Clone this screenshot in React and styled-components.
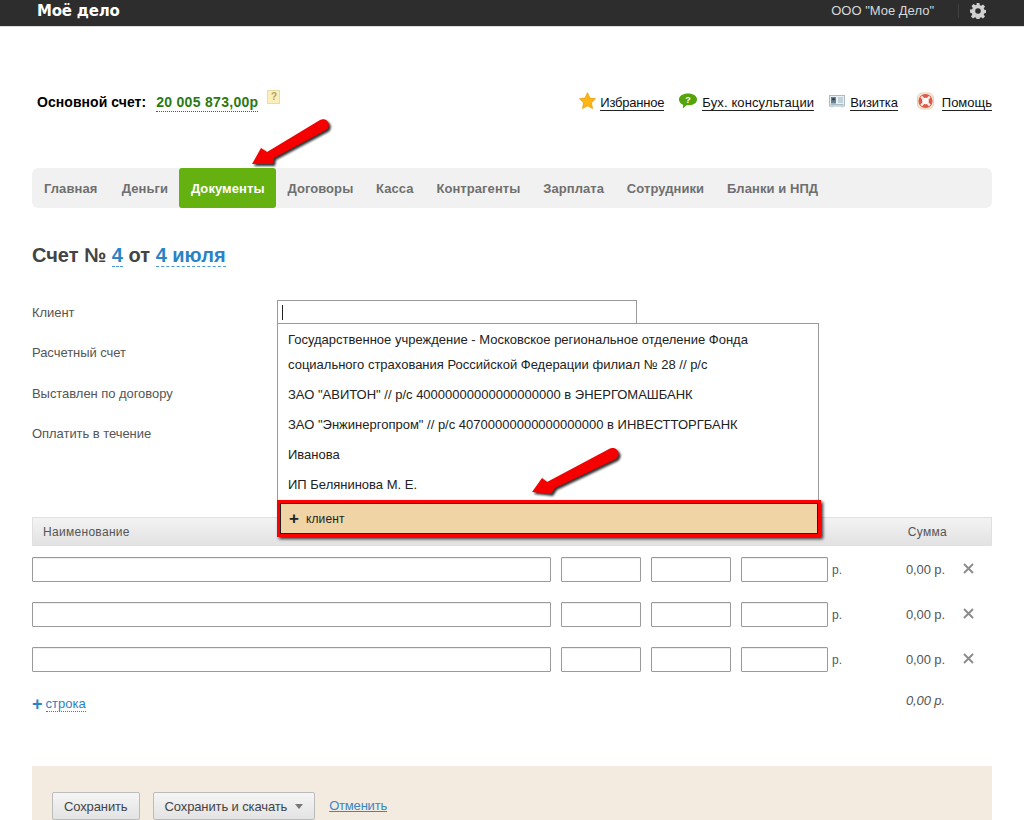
import React from "react";
import styled, { createGlobalStyle } from "styled-components";

const GlobalStyle = createGlobalStyle`
  html, body {
    margin: 0;
    padding: 0;
    background: #fff;
    height: 820px;
    overflow: hidden;
  }
  body {
    font-family: "Liberation Sans", Arial, sans-serif;
    font-size: 13px;
    color: #4a4a4a;
  }
  * {
    box-sizing: border-box;
  }
`;

const Page = styled.div`
  position: relative;
  width: 1024px;
  height: 820px;
  overflow: hidden;
`;
const TopBar = styled.header`
  height: 27px;
  background: #2d2d2d;
  border-bottom: 1px solid #dcdcdc;
  display: flex;
  align-items: center;
  padding: 0 38px 0 37px;
  color: #d8d8d8;
`;
const Logo = styled.div`
  font-family: "DejaVu Sans", sans-serif;
  font-weight: 700;
  font-size: 15px;
  line-height: 20px;
  letter-spacing: -0.2px;
  color: #fff;
  margin-top: -4px;
  flex: 1;
`;
const Company = styled.div`
  font-size: 13px;
  margin-top: -5px;
`;
const BarDivider = styled.div`
  width: 1px;
  height: 14px;
  margin: -5px 11px 0 24px;
  background: #3f3f3f;
`;
const Gear = styled.svg`
  width: 16px;
  height: 16px;
  margin-top: -5px;
  display: block;
`;
const Content = styled.main`
  padding: 0 32px;
`;
const AccountRow = styled.div`
  display: flex;
  align-items: flex-start;
  justify-content: space-between;
  padding: 63px 0 0 5px;
  height: 141px;
`;
const Account = styled.div`
  display: flex;
  align-items: flex-start;
`;
const AccountLabel = styled.span`
  font-size: 14px;
  font-weight: 700;
  color: #000;
  line-height: 24px;
  letter-spacing: 0.05px;
`;
const AccountSum = styled.span`
  font-size: 14px;
  font-weight: 700;
  color: #2a7a12;
  line-height: 16px;
  margin: 4px 0 0 10px;
  letter-spacing: 0.3px;
  border-bottom: 1px dotted #2a7a12;
  height: 18px;
`;
const Hint = styled.span`
  width: 13px;
  height: 14px;
  margin: 0 0 0 9px;
  background: #fbf0ba;
  border: 1px solid #e8dca8;
  color: #b5a268;
  font-size: 10px;
  font-weight: 700;
  line-height: 12px;
  text-align: center;
`;
const QuickLinks = styled.nav`
  display: flex;
  align-items: center;
  height: 24px;
`;
const QuickItem = styled.div`
  display: flex;
  align-items: center;
  margin-left: ${(p) => p.$gap}px;
`;
const QuickIcon = styled.svg`
  width: ${(p) => p.$w}px;
  height: 18px;
  display: block;
  margin-top: -2px;
  margin-right: ${(p) => p.$mr}px;
`;
const QuickLink = styled.a`
  font-size: 13px;
  line-height: 15px;
  letter-spacing: ${(p) => p.$track || 0}px;
  color: #111;
  border-bottom: 1px solid #222;
  margin-top: 2px;
`;
const NavBar = styled.nav`
  display: flex;
  height: 40px;
  background: #f1f1f1;
  border-radius: 6px;
`;
const NavItem = styled.a`
  display: flex;
  align-items: center;
  padding: 0 ${(p) => (p.$first ? 13 : 11.4)}px 0 ${(p) => (p.$first ? 12 : 11.4)}px;
  font-size: 13px;
  font-weight: 700;
  letter-spacing: 0.07px;
  color: ${(p) => (p.$active ? "#fff" : "#6f6f6f")};
  background: ${(p) => (p.$active ? "#64b10f" : "transparent")};
  border-radius: 3px;
`;
const Title = styled.h1`
  margin: 0;
  padding-top: 35px;
  height: 92px;
  font-size: 20px;
  line-height: 24px;
  font-weight: 700;
  color: #444;
`;
const TitleLink = styled.a`
  color: #2a83c6;
  border-bottom: 1px dashed #4a9ad6;
`;
const Form = styled.div`
  height: 217px;
`;
const FormRow = styled.div`
  display: flex;
  height: 40.3px;
`;
const FormLabel = styled.label`
  width: 245px;
  font-size: 13px;
  letter-spacing: -0.05px;
  line-height: 26px;
  color: #555;
`;
const ClientInput = styled.div`
  width: 360px;
  height: 24px;
  border: 1px solid #9a9a9a;
  padding: 4px 4px;
`;
const Caret = styled.div`
  width: 1px;
  height: 15px;
  background: #222;
`;
const Dropdown = styled.div`
  position: absolute;
  left: 277px;
  top: 323px;
  width: 542px;
  height: 214px;
  background: #fff;
  border: 1px solid #9a9a9a;
  padding-top: 3px;
`;
const Option = styled.div`
  padding: 0 10px;
  font-size: 13px;
  line-height: 25px;
  color: #222;
  margin-bottom: 5px;
`;
const NewClient = styled.div`
  position: absolute;
  left: -1px;
  right: -3px;
  top: 176px;
  height: 37px;
  background: #f0d4a6;
  border: 3px solid #f00;
  box-shadow: 2px 2px 3px rgba(0, 0, 0, 0.8), inset 0 0 0 1px #222;
  display: flex;
  align-items: center;
  padding-left: 9px;
  font-size: 12px;
  letter-spacing: 0.1px;
  color: #222;
`;
const PlusMark = styled.b`
  font-size: 17px;
  font-weight: 700;
  color: #222;
  margin-right: 7px;
  line-height: 17px;
`;
const TableHead = styled.div`
  height: 29px;
  display: flex;
  align-items: center;
  justify-content: space-between;
  padding: 0 44px 0 10px;
  background: linear-gradient(#f3f3f3, #e2e2e2);
  border: 1px solid #e0e0e0;
  font-size: 12px;
  letter-spacing: 0.3px;
  color: #555;
`;
const Rows = styled.div`
  padding-top: 11px;
`;
const Row = styled.div`
  display: flex;
  align-items: center;
  height: 25px;
  margin-bottom: 20px;
`;
const Field = styled.div`
  width: ${(p) => p.$w}px;
  height: 25px;
  margin-right: 10px;
  border: 1px solid #9a9a9a;
  border-radius: 1px;
  box-shadow: inset 0 1px 1px #eee;
`;
const Rub = styled.span`
  margin-left: -6px;
  width: 47px;
  color: #4a5a6a;
  font-size: 12px;
`;
const RowSum = styled.span`
  width: 66px;
  text-align: right;
  font-size: 13px;
  letter-spacing: -0.1px;
  color: #555;
`;
const Remove = styled.svg`
  width: 11px;
  height: 11px;
  margin: -3px 0 0 18px;
  display: block;
`;
const AddRow = styled.div`
  display: flex;
  justify-content: space-between;
  padding-right: 47px;
  margin-top: 24px;
  height: 70px;
`;
const AddLink = styled.div`
  display: flex;
  align-items: flex-start;
`;
const AddPlus = styled.b`
  font-size: 18px;
  line-height: 16px;
  color: #2a83c6;
  margin-right: 3px;
`;
const DottedLink = styled.a`
  color: #2a83c6;
  font-size: 13px;
  line-height: 15px;
  border-bottom: 1px dotted #2a83c6;
  height: 16px;
`;
const TotalSum = styled.span`
  font-style: italic;
  font-size: 13px;
  letter-spacing: -0.1px;
  color: #555;
  line-height: 14px;
  margin-top: -2px;
`;
const Footer = styled.div`
  height: 54px;
  background: #f3ebe0;
  padding: 26px 0 0 20px;
  display: flex;
  align-items: flex-start;
`;
const Button = styled.button`
  height: 28px;
  padding: 0 11px;
  margin-right: 13px;
  border: 1px solid #bbb;
  border-radius: 2px;
  background: linear-gradient(#f5f5f5, #e3e3e3);
  font: 13px "Liberation Sans", Arial, sans-serif;
  letter-spacing: -0.12px;
  color: #444;
  display: flex;
  align-items: center;
`;
const Triangle = styled.span`
  width: 0;
  height: 0;
  margin: 1px 0 0 8px;
  border-left: 4.5px solid transparent;
  border-right: 4.5px solid transparent;
  border-top: 5px solid #777;
`;
const CancelLink = styled.a`
  color: #3b86c6;
  font-size: 13px;
  letter-spacing: -0.2px;
  line-height: 15px;
  margin: 6px 0 0 1px;
  text-decoration: underline;
`;
const Arrow = styled.svg`
  position: absolute;
  overflow: visible;
  left: ${(p) => p.$x}px;
  top: ${(p) => p.$y}px;
`;

const navItems = [
  "Главная",
  "Деньги",
  "Документы",
  "Договоры",
  "Касса",
  "Контрагенты",
  "Зарплата",
  "Сотрудники",
  "Бланки и НПД",
];

const clients = [
  "ЗАО \"АВИТОН\" // р/с 40000000000000000000 в ЭНЕРГОМАШБАНК",
  "ЗАО \"Энжинергопром\" // р/с 40700000000000000000 в ИНВЕСТТОРГБАНК",
  "Иванова",
  "ИП Белянинова М. Е.",
];

// x, y are page coordinates, and d uses the same coordinates through viewBox
function RedArrow({ x, y, w, h, d, blurId }) {
  return (
    <Arrow $x={x} $y={y} width={w} height={h} viewBox={`${x} ${y} ${w} ${h}`}>
      <defs>
        <filter id={blurId} x="-20%" y="-20%" width="140%" height="140%">
          <feGaussianBlur stdDeviation="1" />
        </filter>
      </defs>
      <path d={d} fill="#000" opacity="0.8" transform="translate(2 2)" filter={`url(#${blurId})`} />
      <path d={d} fill="#f40000" />
    </Arrow>
  );
}

function ItemRow() {
  return (
    <Row>
      <Field $w={519} />
      <Field $w={80} />
      <Field $w={80} />
      <Field $w={87} />
      <Rub>р.</Rub>
      <RowSum>0,00 р.</RowSum>
      <Remove viewBox="0 0 11 11">
        <path d="M1 1l9 9M10 1l-9 9" stroke="#8d8d8d" strokeWidth="2" />
      </Remove>
    </Row>
  );
}

export default function App() {
  return (
    <Page>
      <GlobalStyle />
      <TopBar>
        <Logo>Моё дело</Logo>
        <Company>ООО "Мое Дело"</Company>
        <BarDivider />
        <Gear viewBox="0 0 16 16">
          <path
            fill="#d0d0d0"
            fillRule="evenodd"
            d="M6.600 0h2.800l.4 2.200 1.300.6 1.900-1.300 2 2-1.300 1.900.6 1.300 2.200.4v2.800l-2.200.4-.6 1.300 1.300 1.900-2 2-1.900-1.300-1.300.6-.4 2.200H6.600l-.4-2.200-1.300-.6-1.900 1.300-2-2 1.300-1.900-.6-1.300L0 9.400V6.600l2.200-.4.6-1.300L1.500 3l2-2 1.900 1.300 1.300-.6zM8 5.200a2.800 2.800 0 1 0 0 5.600 2.800 2.800 0 0 0 0-5.600z"
          />
        </Gear>
      </TopBar>
      <Content>
        <AccountRow>
          <Account>
            <AccountLabel>Основной счет:</AccountLabel>
            <AccountSum>20 005 873,00р</AccountSum>
            <Hint>?</Hint>
          </Account>
          <QuickLinks>
            <QuickItem $gap={0}>
              <QuickIcon viewBox="0 0 17 18" $w={17} $mr={4}>
                <path
                  d="M8.500 .8l2.400 5.300 5.600.7-4.100 4 1.100 5.700-5-2.800-5 2.800 1.100-5.700-4.100-4 5.600-.7z"
                  fill="#fdb515"
                  stroke="#ee9a0a"
                  strokeWidth="0.8"
                />
              </QuickIcon>
              <QuickLink $track={-0.2}>Избранное</QuickLink>
            </QuickItem>
            <QuickItem $gap={15}>
              <QuickIcon viewBox="0 0 18 18" $w={18} $mr={5}>
                <path
                  d="M9 1.500c5 0 9 2.300 9 5.900s-4 5.900-9 5.900h-1.500L3.800 16.500l.4-3.800C1.700 11.700 0 9.800 0 7.400 0 3.800 4 1.500 9 1.500z"
                  fill="#54a40c"
                />
                <text x="9" y="10.500" fontSize="9" fontWeight="700" fill="#fff" textAnchor="middle">
                  ?
                </text>
              </QuickIcon>
              <QuickLink $track={0.12}>Бух. консультации</QuickLink>
            </QuickItem>
            <QuickItem $gap={15}>
              <QuickIcon viewBox="0 0 16 18" $w={16} $mr={5}>
                <rect x="0.5" y="3.500" width="15" height="10.500" fill="#e8f2f6" stroke="#a9bcc6" />
                <rect x="2" y="5" width="5" height="6.500" fill="#6a7f8d" />
                <circle cx="4.500" cy="7.300" r="1.300" fill="#2f3f4b" />
                <path d="M9 6h5M9 8h5M9 10h5" stroke="#9db0bc" />
                <path d="M3 14v1.500M13 14v1.500M1.500 12.500h13" stroke="#a9bcc6" />
              </QuickIcon>
              <QuickLink $track={-0.1}>Визитка</QuickLink>
            </QuickItem>
            <QuickItem $gap={19}>
              <QuickIcon viewBox="0 0 17 18" $w={17} $mr={8}>
                <rect x="0.500" y="1" width="16" height="16" rx="5" fill="#f4e8d4" stroke="#e6d2b4" />
                <circle cx="8.500" cy="9" r="5.200" fill="#fff" stroke="#de5a4c" strokeWidth="3.800" />
                <path
                  d="M4.200 4.700l2.200 2.200M12.800 4.700l-2.200 2.200M4.200 13.300l2.200-2.200M12.800 13.300l-2.200-2.200"
                  stroke="#f6eee6"
                  strokeWidth="2.400"
                />
              </QuickIcon>
              <QuickLink>Помощь</QuickLink>
            </QuickItem>
          </QuickLinks>
        </AccountRow>
        <NavBar>
          {navItems.map((item, i) => (
            <NavItem key={item} $first={i === 0} $active={item === "Документы"}>
              {item}
            </NavItem>
          ))}
        </NavBar>
        <Title>
          Счет № <TitleLink>4</TitleLink> от <TitleLink>4 июля</TitleLink>
        </Title>
        <Form>
          <FormRow>
            <FormLabel>Клиент</FormLabel>
            <ClientInput>
              <Caret />
            </ClientInput>
          </FormRow>
          <FormRow>
            <FormLabel>Расчетный счет</FormLabel>
          </FormRow>
          <FormRow>
            <FormLabel>Выставлен по договору</FormLabel>
          </FormRow>
          <FormRow>
            <FormLabel>Оплатить в течение</FormLabel>
          </FormRow>
        </Form>
        <TableHead>
          <span>Наименование</span>
          <span>Сумма</span>
        </TableHead>
        <Rows>
          <ItemRow />
          <ItemRow />
          <ItemRow />
        </Rows>
        <AddRow>
          <AddLink>
            <AddPlus>+</AddPlus>
            <DottedLink>строка</DottedLink>
          </AddLink>
          <TotalSum>0,00 р.</TotalSum>
        </AddRow>
        <Footer>
          <Button>Сохранить</Button>
          <Button>
            Сохранить и скачать
            <Triangle />
          </Button>
          <CancelLink>Отменить</CancelLink>
        </Footer>
      </Content>
      <Dropdown>
        <Option>
          Государственное учреждение - Московское региональное отделение Фонда
          <br />
          социального страхования Российской Федерации филиал № 28 // р/с
        </Option>
        {clients.map((client) => (
          <Option key={client}>{client}</Option>
        ))}
        <NewClient>
          <PlusMark>+</PlusMark>
          клиент
        </NewClient>
      </Dropdown>
      <RedArrow
        x={245}
        y={115}
        w={90}
        h={55}
        blurId="arrow-a"
        d="M252 164L261 148L267 152L320 120A5 5 0 0 1 326 130L274 158L273 164Z"
      />
      <RedArrow
        x={525}
        y={442}
        w={100}
        h={55}
        blurId="arrow-b"
        d="M532 492L542 478L547 482L609 449A5.500 5.500 0 0 1 616 459L555 488L551 494Z"
      />
    </Page>
  );
}
